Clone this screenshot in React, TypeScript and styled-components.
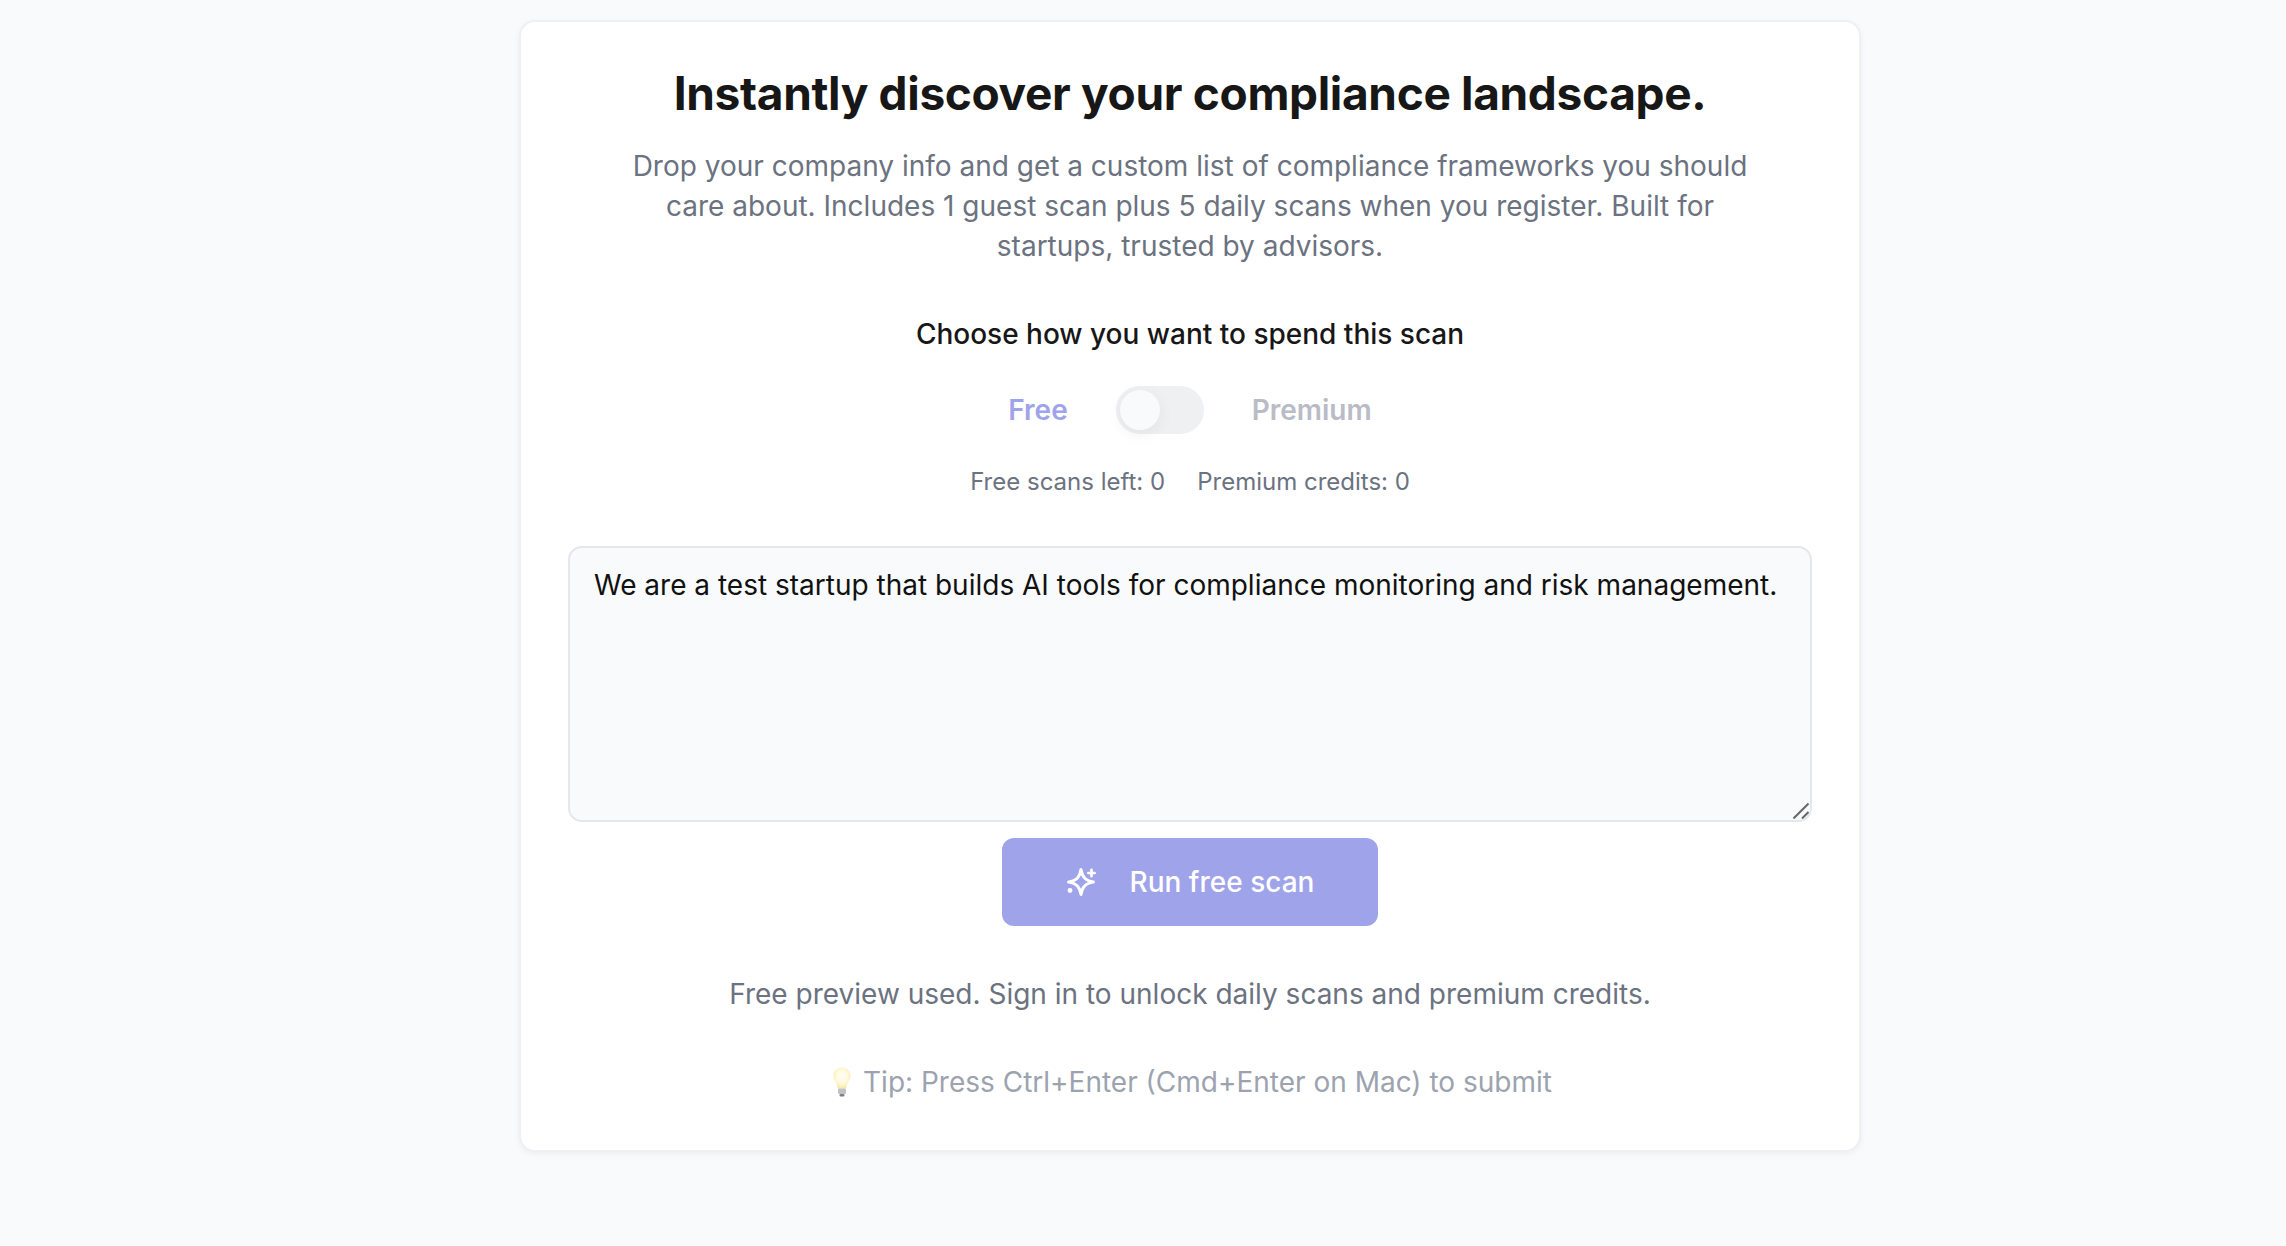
import styled, { createGlobalStyle } from "styled-components";

const GlobalStyle = createGlobalStyle`
  html, body {
    margin: 0;
    padding: 0;
    background: #f9fafb;
    font-family: Inter, "Liberation Sans", sans-serif;
  }
`;

const Bulb = () => (
  <svg width="22" height="32" viewBox="0 0 22 32">
    <defs>
      <radialGradient id="glass" cx="50%" cy="42%" r="58%">
        <stop offset="0%" stopColor="#fffef6" />
        <stop offset="60%" stopColor="#fff9dc" />
        <stop offset="100%" stopColor="#f8e7a4" />
      </radialGradient>
    </defs>
    <path
      d="M11 1.500C6 1.500 2.500 5.200 2.500 9.800c0 4.400 3.500 6 4.300 12.700h8.400c.8-6.700 4.300-8.300 4.300-12.700C19.500 5.200 16 1.500 11 1.500z"
      fill="url(#glass)"
    />
    <rect x="7" y="22.500" width="8" height="5.500" rx="1" fill="#bfc2c6" />
    <rect x="8.500" y="28" width="5" height="2.500" rx="1" fill="#7d8086" />
  </svg>
);

const ScanIcon = () => (
  <svg width="32" height="32" viewBox="0 0 32 32" fill="none" stroke="currentColor" strokeLinecap="round" strokeLinejoin="round">
    <path
      d="M15 3.500C16.200 11 19.200 14.600 27.500 16C19.200 17.400 16.200 21 15 28.500C13.800 21 10.800 17.400 2.500 16C10.800 14.600 13.800 11 15 3.500Z"
      strokeWidth="3"
    />
    <path d="M25.500 3.800v6.400M22.300 7h6.400" strokeWidth="2.600" />
    <circle cx="4" cy="24.500" r="2.400" fill="currentColor" stroke="none" />
  </svg>
);

export default function App() {
  return (
    <Page>
      <GlobalStyle />
      <Card>
        <Title>Instantly discover your compliance landscape.</Title>
        <Intro>
          Drop your company info and get a custom list of compliance frameworks
          you should care about. Includes 1 guest scan plus 5 daily scans when
          you register. Built for startups, trusted by advisors.
        </Intro>
        <ModeLabel>Choose how you want to spend this scan</ModeLabel>
        <ToggleRow>
          <ModeName $active>Free</ModeName>
          <Track>
            <Knob />
          </Track>
          <ModeName>Premium</ModeName>
        </ToggleRow>
        <Counts>
          <span>Free scans left: 0</span>
          <span>Premium credits: 0</span>
        </Counts>
        <InputWrap>
          <Input defaultValue="We are a test startup that builds AI tools for compliance monitoring and risk management." />
          <Grip viewBox="0 0 16 16">
            <path d="M0.500 15.500L15.500 0.500M9 15.500L15.500 9" />
          </Grip>
        </InputWrap>
        <RunButton>
          <ScanIcon />
          Run free scan
        </RunButton>
        <Notice>Free preview used. Sign in to unlock daily scans and premium credits.</Notice>
        <Tip>
          <Bulb />
          Tip: Press Ctrl+Enter (Cmd+Enter on Mac) to submit
        </Tip>
      </Card>
    </Page>
  );
}

const Page = styled.div`
  min-height: 1246px;
  box-sizing: border-box;
  padding: 20px 0 0 94px;
  display: flex;
  justify-content: center;
  align-items: flex-start;
`;

const Card = styled.main`
  width: 1342px;
  height: 1132px;
  box-sizing: border-box;
  padding: 0 47px;
  background: #fff;
  border: 2px solid #eef0f3;
  border-radius: 16px;
  box-shadow: 0 2px 6px rgba(0, 0, 0, 0.05);
  display: flex;
  flex-direction: column;
  align-items: center;
`;

const Title = styled.h1`
  margin: 41px 0 0;
  font-family: Inter, sans-serif;
  font-size: 46px;
  line-height: 60px;
  font-weight: 700;
  letter-spacing: -0.33px;
  color: #171717;
  white-space: nowrap;
`;

const Intro = styled.p`
  margin: 23px 0 0;
  width: 1140px;
  font-size: 28px;
  line-height: 40px;
  color: #6b7280;
  text-align: center;
`;

const ModeLabel = styled.div`
  margin-top: 48px;
  font-size: 28px;
  line-height: 40px;
  font-weight: 500;
  color: #171717;
`;

const ToggleRow = styled.div`
  margin-top: 32px;
  display: flex;
  align-items: center;
  gap: 48px;
`;

const ModeName = styled.span<{ $active?: boolean }>`
  font-size: 28px;
  font-weight: 600;
  color: ${(p) => (p.$active ? "#9fa3ea" : "#b9bcc6")};
`;

const Track = styled.div`
  width: 88px;
  height: 48px;
  padding: 4px;
  box-sizing: border-box;
  border-radius: 24px;
  background: #eff0f2;
`;

const Knob = styled.div`
  width: 40px;
  height: 40px;
  border-radius: 50%;
  background: #f9fafb;
  box-shadow: 0 4px 16px rgba(0, 0, 0, 0.06);
`;

const Counts = styled.div`
  margin-top: 31px;
  display: flex;
  gap: 32px;
  font-size: 24px;
  line-height: 34px;
  color: #6b7280;
`;

const InputWrap = styled.div`
  position: relative;
  margin-top: 47px;
  width: 100%;
`;

const Input = styled.textarea`
  display: block;
  width: 100%;
  height: 276px;
  box-sizing: border-box;
  padding: 19px 24px;
  background: #f9fafb;
  border: 2px solid #e5e7eb;
  border-radius: 14px;
  font-family: Inter, sans-serif;
  font-size: 28px;
  line-height: 36px;
  color: #111;
  outline: none;
  resize: none;
`;

const Grip = styled.svg`
  position: absolute;
  right: 3px;
  bottom: 3px;
  width: 16px;
  height: 16px;
  pointer-events: none;
  fill: none;
  stroke: #666;
  stroke-width: 2;
`;

const RunButton = styled.button`
  margin-top: 16px;
  width: 376px;
  height: 88px;
  border: 0;
  border-radius: 12px;
  background: #9fa3ea;
  color: #fff;
  font-family: Inter, sans-serif;
  font-size: 28px;
  font-weight: 500;
  display: flex;
  align-items: center;
  justify-content: center;
  gap: 32px;
`;

const Notice = styled.p`
  margin: 48px 0 0;
  font-size: 28px;
  line-height: 40px;
  color: #6b7280;
`;

const Tip = styled.div`
  margin-top: 48px;
  padding-left: 3px;
  display: flex;
  align-items: center;
  gap: 10px;
  font-size: 28px;
  line-height: 40px;
  color: #9ca3af;
`;
